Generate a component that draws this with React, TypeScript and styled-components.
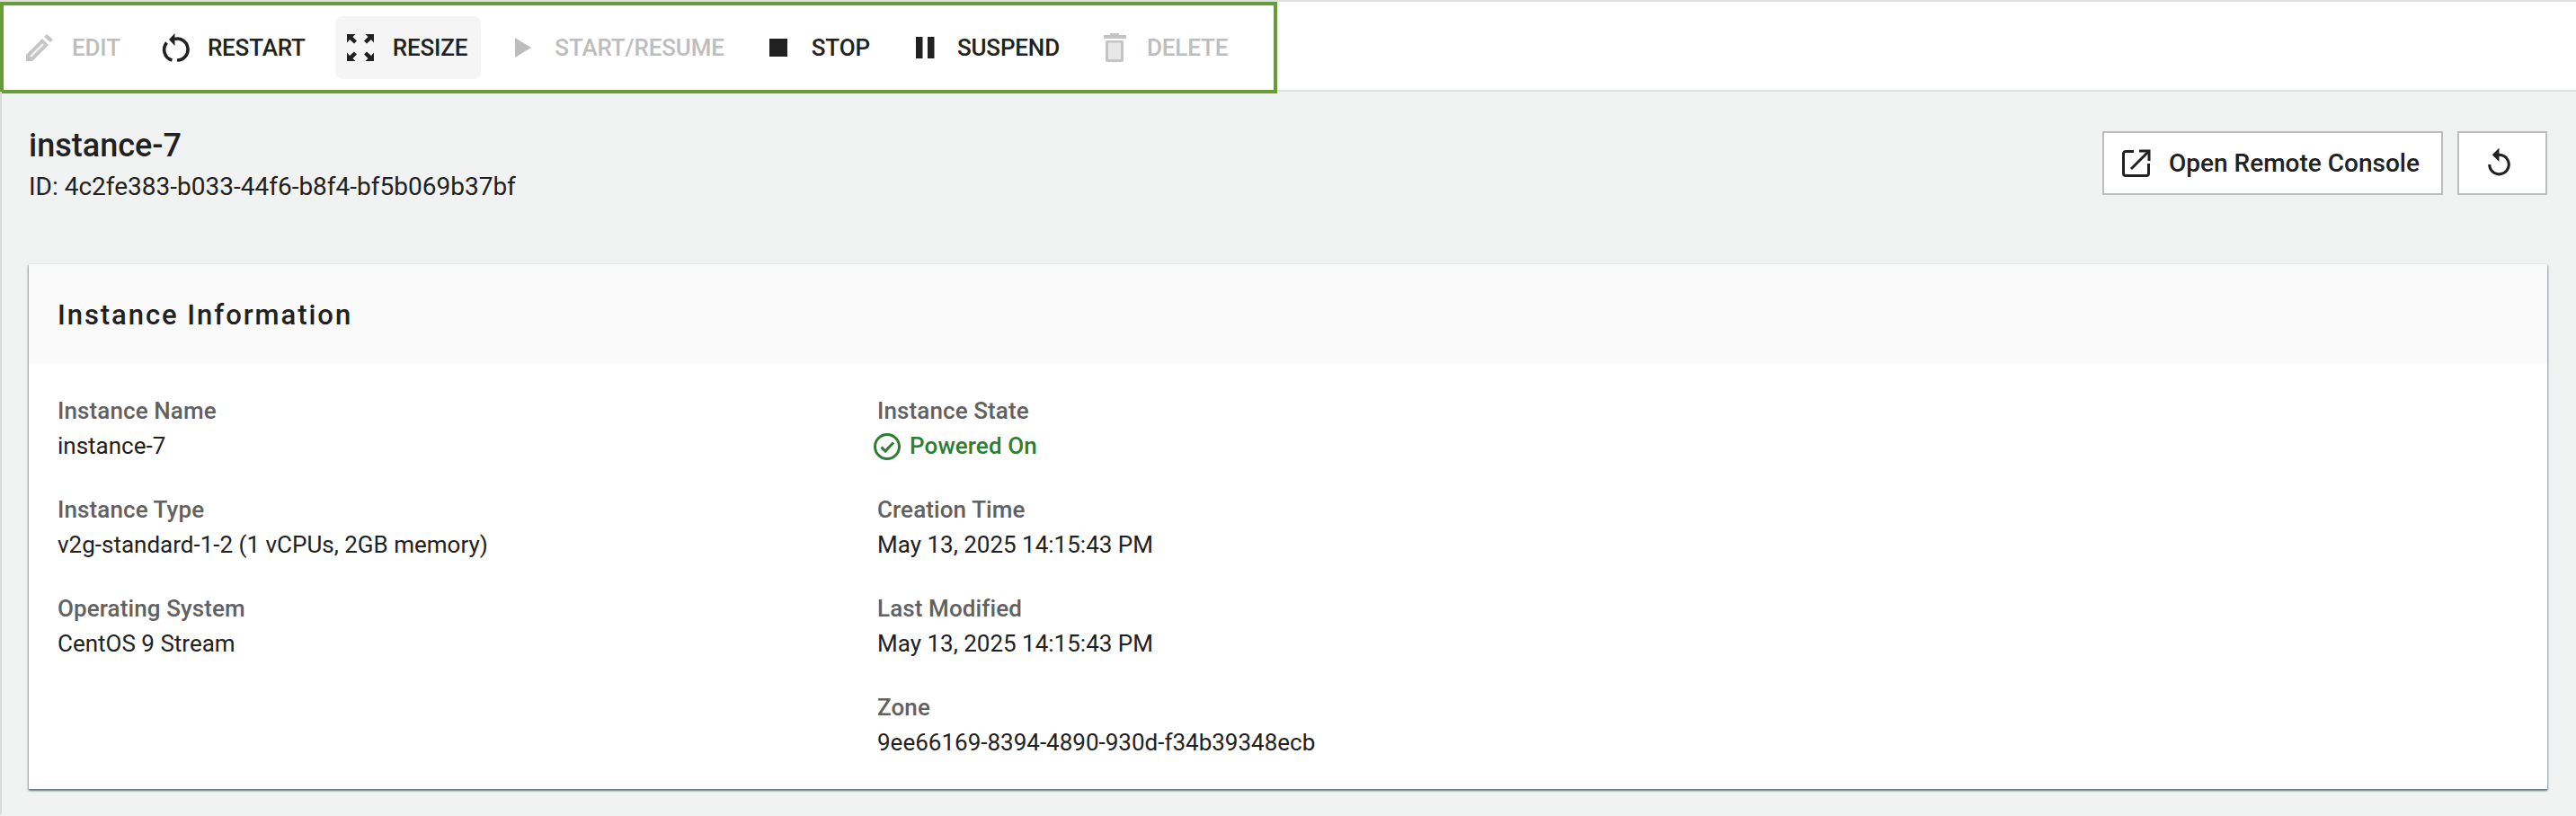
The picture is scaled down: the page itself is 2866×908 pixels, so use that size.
// Instance detail page

import styled, { createGlobalStyle } from "styled-components";

const GlobalStyle = createGlobalStyle`
  html, body {
    margin: 0;
    padding: 0;
    background: #f1f3f2;
    font-family: Roboto, "Liberation Sans", sans-serif;
    color: #212121;
  }
  * {
    box-sizing: border-box;
  }
`;

const Page = styled.div`
  width: 2866px;
  height: 908px;
  overflow: hidden;
`;

// 상단 툴바
const Toolbar = styled.div`
  height: 102px;
  background: #fff;
  border-top: 2px solid #e0e0e0;
  border-bottom: 2px solid #e0e0e0;
`;

const ToolbarGroup = styled.div`
  width: 1421px;
  height: 102px;
  display: flex;
  align-items: center;
  gap: 18px;
  padding-left: 12px;
  border: 4px solid #669d34;
`;

const ToolButton = styled.div<{ $disabled?: boolean; $active?: boolean }>`
  height: 70px;
  display: flex;
  align-items: center;
  gap: 20px;
  padding: 0 15px 0 12px;
  border-radius: 8px;
  font-size: 26px;
  font-weight: 500;
  letter-spacing: -0.16px;
  color: ${(p) => (p.$disabled ? "#bdbdbd" : "#212121")};
  background: ${(p) => (p.$active ? "#f5f5f5" : "transparent")};
`;

const Main = styled.div`
  height: 804px;
  padding: 37px 32px 0 30px;
  border-left: 2px solid #d8dcdc;
`;

const Heading = styled.div`
  display: flex;
  justify-content: space-between;
  align-items: flex-start;
  height: 155px;
`;

const Name = styled.h1`
  margin: 0;
  font-size: 36px;
  line-height: 46px;
  font-weight: 500;
`;

const InstanceId = styled.div`
  font-size: 28px;
  line-height: 40px;
  margin-top: 3px;
`;

const Actions = styled.div`
  display: flex;
  gap: 16px;
  margin-top: 7px;
`;

const OutlineButton = styled.div<{ $wide?: boolean }>`
  width: ${(p) => (p.$wide ? "379px" : "100px")};
  height: 71px;
  display: flex;
  align-items: center;
  justify-content: ${(p) => (p.$wide ? "flex-start" : "center")};
  gap: 20px;
  padding-left: ${(p) => (p.$wide ? "20px" : "0")};
  padding-right: ${(p) => (p.$wide ? "0" : "8px")};
  background: #fff;
  border: 2px solid #bdbdbd;
  font-size: 28px;
  font-weight: 500;
`;

const Card = styled.section`
  width: 2802px;
  height: 584px;
  background: #fff;
  box-shadow: 0 2px 2px rgba(84, 104, 112, 0.75), 1px 1px 2px rgba(84, 104, 112, 0.4),
    -1px 1px 2px rgba(84, 104, 112, 0.4);
`;

const CardTitle = styled.h2`
  margin: 0;
  height: 111px;
  padding: 2px 32px 0;
  display: flex;
  align-items: center;
  background: #fafafa;
  font-size: 31px;
  font-weight: 500;
  letter-spacing: 1.95px;
`;

const CardBody = styled.div`
  display: grid;
  grid-template-columns: 912px 1fr;
  padding: 33px 32px 0;
`;

const Column = styled.div`
  display: flex;
  flex-direction: column;
`;

const Field = styled.div`
  height: 110px;
`;

const Label = styled.div`
  font-size: 26px;
  line-height: 39px;
  font-weight: 500;
  letter-spacing: 0.1px;
  color: #616161;
`;

const Value = styled.div`
  font-size: 26px;
  line-height: 39px;
`;

const StateValue = styled(Value)`
  display: flex;
  align-items: center;
  gap: 10px;
  margin-left: -4px;
  color: #2e7d32;
  font-weight: 500;
  letter-spacing: 0.1px;
`;

const Svg = ({ children }: { children: React.ReactNode }) => (
  <svg width="32" height="32" viewBox="0 0 32 32" fill="currentColor">
    {children}
  </svg>
);

const EditIcon = () => (
  <Svg>
    <path d="M1 24 L19 6 L26 13 L8 31 L1 31 Z" fill="#c4c4c4" />
    <path d="M6 26 L20 12" stroke="#eee" strokeWidth="2.5" />
    <path d="M24 1 L31 7 L28 10 L21 4 Z" fill="#c4c4c4" />
  </Svg>
);

const RestartIcon = () => (
  <Svg>
    <g fill="none" stroke="currentColor" strokeWidth="3.6">
      <path d="M15 6.5 A11.7 12 0 1 1 18 30" />
      <path d="M12.5 30 A11.7 12 0 0 1 6.5 10.5" />
    </g>
    <path d="M9 7 L15.5 0 V14 Z" />
  </Svg>
);

const Corner = ({ flip }: { flip?: string }) => (
  <path d="M1 1 H10.5 L7.5 4 L12 8.5 L9 11.5 L4 7 L1 10.5 Z" transform={flip} />
);

const ResizeIcon = () => (
  <Svg>
    <Corner />
    <Corner flip="translate(32 0) scale(-1 1)" />
    <Corner flip="translate(0 32) scale(1 -1)" />
    <Corner flip="translate(32 32) scale(-1 -1)" />
  </Svg>
);

const PlayIcon = () => (
  <Svg>
    <path d="M8 5 L26 16 L8 27 Z" />
  </Svg>
);

const StopIcon = () => (
  <Svg>
    <rect x="5" y="6" width="20" height="20" />
  </Svg>
);

const PauseIcon = () => (
  <Svg>
    <rect x="6" y="4" width="7.5" height="24" />
    <rect x="19" y="4" width="7.5" height="24" />
  </Svg>
);

const DeleteIcon = () => (
  <Svg>
    <path d="M11 0 H21 V2 H29 V6 H4 V2 H11 Z" fill="#c4c4c4" />
    <rect x="6" y="8" width="20" height="24" rx="2" fill="#c4c4c4" />
    <rect x="9" y="10.5" width="14" height="18.5" fill="#e8e8e8" />
  </Svg>
);

const ExternalIcon = () => (
  <Svg>
    <g fill="none" stroke="currentColor" strokeWidth="3">
      <path d="M13 2.5 H4 A2.5 2.5 0 0 0 1.5 5 V27 A2.5 2.5 0 0 0 4 29.5 H27 A2.5 2.5 0 0 0 29.5 27 V16" />
      <path d="M10 22 L29 3" />
      <path d="M19 2 H30 V13" />
    </g>
  </Svg>
);

const ReplayIcon = () => (
  <svg width="37" height="37" viewBox="0 0 24 24" fill="currentColor">
    <path d="M12 5V1L7 6l5 5V7c3.31 0 6 2.69 6 6s-2.69 6-6 6-6-2.69-6-6H4c0 4.42 3.58 8 8 8s8-3.58 8-8-3.58-8-8-8z" />
  </svg>
);

const CheckIcon = () => (
  <svg width="30" height="30" viewBox="0 0 30 30" fill="none" stroke="currentColor" strokeWidth="3">
    <circle cx="15" cy="15" r="13.5" />
    <path d="M8.5 15.5 L13 20 L22 10.5" />
  </svg>
);

const tools = [
  { label: "EDIT", icon: <EditIcon />, disabled: true },
  { label: "RESTART", icon: <RestartIcon /> },
  { label: "RESIZE", icon: <ResizeIcon />, active: true },
  { label: "START/RESUME", icon: <PlayIcon />, disabled: true },
  { label: "STOP", icon: <StopIcon /> },
  { label: "SUSPEND", icon: <PauseIcon /> },
  { label: "DELETE", icon: <DeleteIcon />, disabled: true },
];

const leftFields = [
  { label: "Instance Name", value: "instance-7" },
  { label: "Instance Type", value: "v2g-standard-1-2 (1 vCPUs, 2GB memory)" },
  { label: "Operating System", value: "CentOS 9 Stream" },
];

const rightFields = [
  { label: "Creation Time", value: "May 13, 2025 14:15:43 PM" },
  { label: "Last Modified", value: "May 13, 2025 14:15:43 PM" },
  { label: "Zone", value: "9ee66169-8394-4890-930d-f34b39348ecb" },
];

export default function App() {
  return (
    <Page>
      <GlobalStyle />
      <Toolbar>
        <ToolbarGroup>
          {tools.map((t) => (
            <ToolButton key={t.label} $disabled={t.disabled} $active={t.active}>
              {t.icon}
              {t.label}
            </ToolButton>
          ))}
        </ToolbarGroup>
      </Toolbar>
      <Main>
        <Heading>
          <div>
            <Name>instance-7</Name>
            <InstanceId>ID: 4c2fe383-b033-44f6-b8f4-bf5b069b37bf</InstanceId>
          </div>
          <Actions>
            <OutlineButton $wide>
              <ExternalIcon />
              Open Remote Console
            </OutlineButton>
            <OutlineButton>
              <ReplayIcon />
            </OutlineButton>
          </Actions>
        </Heading>
        <Card>
          <CardTitle>Instance Information</CardTitle>
          <CardBody>
            <Column>
              {leftFields.map((f) => (
                <Field key={f.label}>
                  <Label>{f.label}</Label>
                  <Value>{f.value}</Value>
                </Field>
              ))}
            </Column>
            <Column>
              <Field>
                <Label>Instance State</Label>
                <StateValue>
                  <CheckIcon />
                  Powered On
                </StateValue>
              </Field>
              {rightFields.map((f) => (
                <Field key={f.label}>
                  <Label>{f.label}</Label>
                  <Value>{f.value}</Value>
                </Field>
              ))}
            </Column>
          </CardBody>
        </Card>
      </Main>
    </Page>
  );
}
